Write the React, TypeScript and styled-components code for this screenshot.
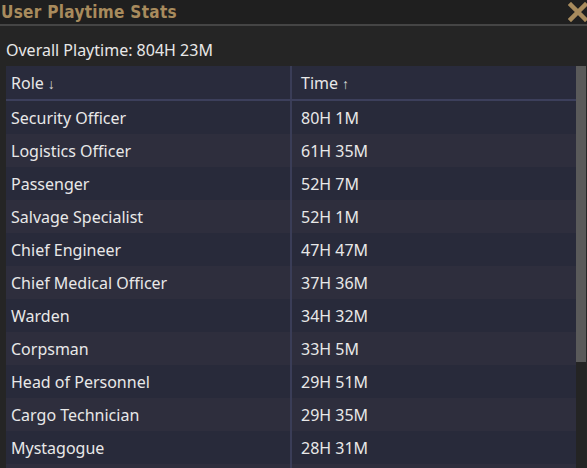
import React from 'react'
import styled, { createGlobalStyle } from 'styled-components'

const rows: [string, string][] = [
  ['Security Officer', '80H 1M'],
  ['Logistics Officer', '61H 35M'],
  ['Passenger', '52H 7M'],
  ['Salvage Specialist', '52H 1M'],
  ['Chief Engineer', '47H 47M'],
  ['Chief Medical Officer', '37H 36M'],
  ['Warden', '34H 32M'],
  ['Corpsman', '33H 5M'],
  ['Head of Personnel', '29H 51M'],
  ['Cargo Technician', '29H 35M'],
  ['Mystagogue', '28H 31M'],
]

const GlobalStyle = createGlobalStyle`
  html, body {
    margin: 0;
    padding: 0;
    background: #252525;
    overflow: hidden;
  }
`

const Window = styled.div`
  width: 587px;
  height: 468px;
  display: flex;
  flex-direction: column;
  background: #252525;
  font-family: 'Noto Sans', sans-serif;
  color: #e8e8e8;
  overflow: hidden;
`

const TitleBar = styled.div`
  height: 24px;
  display: flex;
  align-items: center;
  justify-content: space-between;
  background: #1f1f1f;
  border-bottom: 2px solid #454545;
  flex-shrink: 0;
`

const Title = styled.div`
  font-family: 'DejaVu Sans Condensed', 'DejaVu Sans', sans-serif;
  font-stretch: condensed;
  font-weight: bold;
  font-size: 17px;
  letter-spacing: 0.3px;
  color: #a88b5d;
  padding-left: 1px;
  line-height: 24px;
`

const Close = styled.div`
  width: 22px;
  height: 22px;
  display: flex;
  align-items: center;
  justify-content: center;
  margin-right: -2px;
`

const Summary = styled.div`
  font-size: 16px;
  padding: 13px 0 0 6px;
  height: 40px;
  box-sizing: border-box;
  line-height: 22px;
  flex-shrink: 0;
`

const Body = styled.div`
  display: flex;
  flex: 1;
  min-height: 0;
  padding-left: 6px;
`

const Table = styled.div`
  flex: 1;
  display: flex;
  flex-direction: column;
  overflow: hidden;
`

const Row = styled.div<{ $bg: string }>`
  display: grid;
  grid-template-columns: 284px 2px 1fr;
  height: 33px;
  flex-shrink: 0;
  background: ${(p) => p.$bg};
  font-size: 16px;
`

const HeaderRow = styled(Row)`
  border-bottom: 2px solid #3c3f5b;
`

const Filler = styled.div`
  flex: 1;
  flex-shrink: 0;
  min-height: 4px;
  display: grid;
  grid-template-columns: 284px 2px 1fr;
  background: #2e2e3d;
`

const Cell = styled.div`
  display: flex;
  align-items: center;
  padding-left: 5px;
  white-space: nowrap;
`

const TimeCell = styled(Cell)`
  padding-left: 9px;
`

const Divider = styled.div`
  background: #3a3d57;
`

const Arrow = styled.span`
  font-size: 14px;
  margin-left: 4px;
  color: #d8d8d8;
  position: relative;
  top: 1px;
`

const Scrollbar = styled.div`
  width: 10px;
  margin-right: 1px;
  background: #242424;
  display: flex;
  flex-direction: column;
`

const Thumb = styled.div`
  height: 296px;
  background: #5a5a5a;
`

export default function App() {
  return (
    <Window>
      <GlobalStyle />
      <TitleBar>
        <Title>User Playtime Stats</Title>
        <Close>
          <svg width="20" height="20" viewBox="0 0 20 20">
            <path d="M3 3 L17 17 M17 3 L3 17" stroke="#a88b5d" strokeWidth="4.5" strokeLinecap="square" />
          </svg>
        </Close>
      </TitleBar>
      <Summary>Overall Playtime: 804H 23M</Summary>
      <Body>
        <Table>
          <HeaderRow $bg="#292b3c">
            <Cell>
              Role<Arrow>↓</Arrow>
            </Cell>
            <Divider />
            <TimeCell>
              Time<Arrow>↑</Arrow>
            </TimeCell>
          </HeaderRow>
          {rows.map(([role, time], i) => (
            <Row key={role} $bg={i % 2 === 0 ? '#282a3a' : '#2e2e3d'}>
              <Cell>{role}</Cell>
              <Divider />
              <TimeCell>{time}</TimeCell>
            </Row>
          ))}
          <Filler>
            <div />
            <Divider />
            <div />
          </Filler>
        </Table>
        <Scrollbar>
          <Thumb />
        </Scrollbar>
      </Body>
    </Window>
  )
}
